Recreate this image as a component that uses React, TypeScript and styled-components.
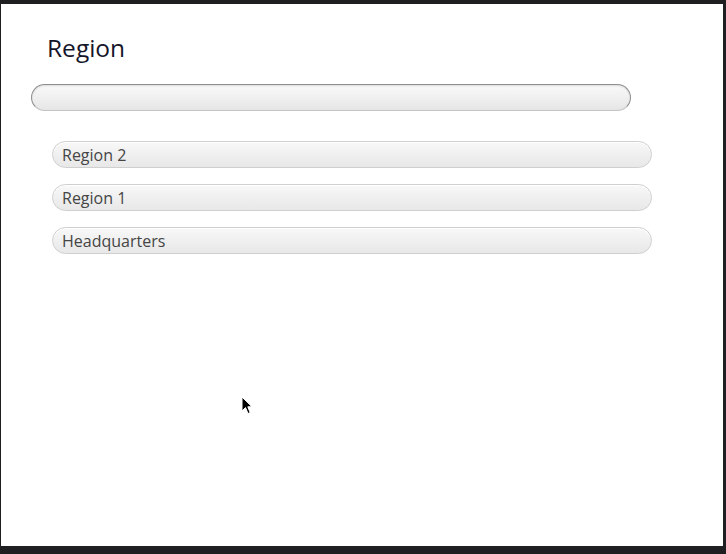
import styled, { createGlobalStyle } from 'styled-components';

const regions = ['Region 2', 'Region 1', 'Headquarters'];

const GlobalStyle = createGlobalStyle`
  html, body {
    margin: 0;
    padding: 0;
    background: #1f1f21;
    font-family: "Open Sans", "Noto Sans", sans-serif;
  }
`;

export default function App() {
  return (
    <>
      <GlobalStyle />
      <Frame>
        <Panel>
          <Title>Region</Title>
          <SearchField type="text" aria-label="Search regions" />
          <RegionList>
            {regions.map((name) => (
              <RegionItem key={name}>{name}</RegionItem>
            ))}
          </RegionList>
          <Cursor width="12" height="19" viewBox="0 0 12 19" aria-hidden="true">
            <path
              d="M1 1 L1 15 L4.5 11.6 L7 17.5 L9.2 16.6 L6.8 10.8 L11 10.8 Z"
              fill="#000"
              stroke="#fff"
              strokeWidth="1"
              strokeLinejoin="round"
            />
          </Cursor>
        </Panel>
      </Frame>
    </>
  );
}

const Frame = styled.div`
  width: 726px;
  height: 554px;
  padding: 4px 3px 8px 1px;
  box-sizing: border-box;
  display: flex;
`;

const Panel = styled.main`
  position: relative;
  flex: 1;
  background: #ffffff;
  padding: 30px 0 0 30px;
  display: flex;
  flex-direction: column;
`;

const Title = styled.h1`
  margin: 0 0 22px 16px;
  font-size: 24.5px;
  line-height: 28px;
  font-weight: 400;
  color: #15152a;
`;

const SearchField = styled.input`
  width: 600px;
  height: 27px;
  box-sizing: border-box;
  margin: 0;
  border: 1px solid #8e8e8e;
  border-bottom-color: #c4c4c4;
  border-radius: 14px;
  background: linear-gradient(180deg, #f9f9f9 0%, #efefef 55%, #e6e6e6 100%);
  box-shadow: inset 0 1px 2px rgba(0, 0, 0, 0.12);
  outline: none;
`;

const RegionList = styled.ul`
  list-style: none;
  margin: 30px 0 0 21px;
  padding: 0;
  display: flex;
  flex-direction: column;
  gap: 16px;
`;

const RegionItem = styled.li`
  width: 600px;
  height: 27px;
  box-sizing: border-box;
  display: flex;
  align-items: center;
  padding: 0 9px;
  border: 1px solid #cfcfcf;
  border-radius: 14px;
  background: linear-gradient(180deg, #f8f8f8 0%, #eeeeee 60%, #e8e8e8 100%);
  box-shadow: inset 0 1px 0 #ffffff;
  color: #454545;
  font-size: 16px;
`;

const Cursor = styled.svg`
  position: absolute;
  left: 240px;
  top: 392px;
`;
